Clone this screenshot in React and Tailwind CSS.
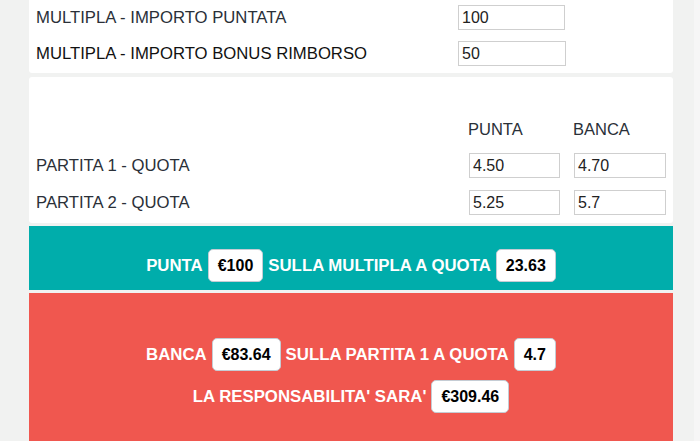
import React from "react";

function Badge({ children }) {
  return (
    <span className="inline-flex h-[33px] items-center rounded-[5px] border border-[#c5ccd4] bg-white px-[9px] text-[16px] font-bold text-black">
      {children}
    </span>
  );
}

function Field({ value, w = "w-[107px]" }) {
  return (
    <div className={`${w} h-[25px] border border-[#cfcfcf] bg-white pl-[3px] text-[16px] leading-[23px] text-[#222]`}>
      {value}
    </div>
  );
}

export default function App() {
  return (
    <div
      className="flex h-[441px] w-[700px] overflow-hidden bg-[#f1f2f1]"
      style={{ fontFamily: '"Liberation Sans", Arial, sans-serif' }}
    >
      <div className="ml-[29px] flex w-[644px] flex-col">
        {/* card 1 */}
        <div className="flex h-[73px] flex-col gap-[11px] rounded-b-[3px] bg-white pl-[7px] pt-[5px]">
          <div className="flex items-center">
            <div className="w-[422px] text-[16.7px] text-[#2a3038]">MULTIPLA - IMPORTO PUNTATA</div>
            <Field value="100" />
          </div>
          <div className="flex items-center">
            <div className="w-[422px] text-[16.7px] text-[#111]">MULTIPLA - IMPORTO BONUS RIMBORSO</div>
            <Field value="50" w="w-[108px]" />
          </div>
        </div>

        {/* card 2 */}
        <div className="mt-[4px] flex h-[146px] flex-col rounded-[3px] bg-white pl-[7px] pt-[42px]">
          <div className="flex h-[20px] items-center text-[16.5px] text-[#2a3038]">
            <div className="w-[432px]" />
            <div className="w-[105px]">PUNTA</div>
            <div>BANCA</div>
          </div>
          <div className="mt-[14px] flex flex-col gap-[12px]">
            <div className="flex items-center">
              <div className="w-[433px] text-[16.7px] text-[#2a3038]">PARTITA 1 - QUOTA</div>
              <Field value="4.50" w="w-[91px]" />
              <div className="w-[14px]" />
              <Field value="4.70" w="w-[92px]" />
            </div>
            <div className="flex items-center">
              <div className="w-[433px] text-[16.7px] text-[#2a3038]">PARTITA 2 - QUOTA</div>
              <Field value="5.25" w="w-[91px]" />
              <div className="w-[14px]" />
              <Field value="5.7" w="w-[92px]" />
            </div>
          </div>
        </div>

        {/* teal */}
        <div className="mt-[3px] flex h-[64px] items-start justify-center bg-[#00adab] pt-[23px] text-[16.8px] font-bold text-white">
          <div className="flex items-center gap-[5px]">
            <span>PUNTA</span>
            <Badge>€100</Badge>
            <span>SULLA MULTIPLA A QUOTA</span>
            <Badge>23.63</Badge>
          </div>
        </div>

        {/* red */}
        <div className="mt-[3px] flex flex-1 flex-col items-center gap-[9px] bg-[#f0574f] pt-[45px] text-[16.8px] font-bold text-white">
          <div className="flex items-center gap-[5px]">
            <span>BANCA</span>
            <Badge>€83.64</Badge>
            <span>SULLA PARTITA 1 A QUOTA</span>
            <Badge>4.7</Badge>
          </div>
          <div className="flex items-center gap-[5px]">
            <span>LA RESPONSABILITA' SARA'</span>
            <Badge>€309.46</Badge>
          </div>
        </div>
      </div>
      <div className="ml-auto w-[6px] bg-[#f6f6f6]" />
    </div>
  );
}
